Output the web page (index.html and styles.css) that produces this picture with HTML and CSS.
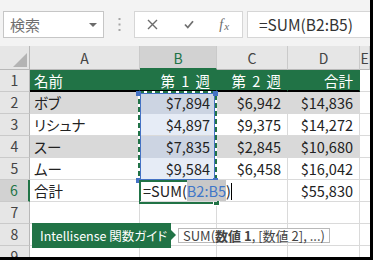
FILE: index.html
```html
<!DOCTYPE html>
<html lang="ja">
<head>
  <meta charset="UTF-8">
  <title>SUM</title>
  <link rel="stylesheet" href="styles.css">
</head>
<body>
  <div class="window">
    <div class="formula-bar">
      <div class="name-box">
        <span class="name">検索</span>
        <span class="caret"></span>
      </div>
      <div class="grip">
        <svg width="3" height="13" viewBox="0 0 3 13"><rect x="0.5" y="0" width="2" height="2" fill="#a6a6a6"/><rect x="0.5" y="5.5" width="2" height="2" fill="#a6a6a6"/><rect x="0.5" y="11" width="2" height="2" fill="#a6a6a6"/></svg>
      </div>
      <div class="fn-buttons">
        <span class="fn-btn"><svg width="11" height="11" viewBox="0 0 11 11"><path d="M1 1 L10 10 M10 1 L1 10" stroke="#6b6b6b" stroke-width="1.4" fill="none"/></svg></span>
        <span class="fn-btn"><svg width="10" height="9" viewBox="0 0 10 9"><path d="M1 4.5 L3.8 7.5 L9 1.2" stroke="#707070" stroke-width="1.8" fill="none"/></svg></span>
        <span class="fn-btn fx"><i>f</i><i class="sub">x</i></span>
      </div>
      <div class="formula-input">=SUM(B2:B5)</div>
    </div>

    <div class="sheet">
      <div class="corner"><span class="tri"></span></div>
      <div class="ch">A</div><div class="ch on">B</div><div class="ch">C</div><div class="ch">D</div><div class="ch">E</div>

      <div class="rh">1</div>
      <div class="c hd">名前</div><div class="c hd num">第 1 週</div><div class="c hd num">第 2 週</div><div class="c hd num">合計</div><div class="c"></div>

      <div class="rh">2</div>
      <div class="c band">ボブ</div><div class="c band ref-dark num">$7,894</div><div class="c band num">$6,942</div><div class="c band num">$14,836</div><div class="c"></div>

      <div class="rh">3</div>
      <div class="c">リシュナ</div><div class="c ref-light num">$4,897</div><div class="c num">$9,375</div><div class="c num">$14,272</div><div class="c"></div>

      <div class="rh">4</div>
      <div class="c band">スー</div><div class="c band ref-dark num">$7,835</div><div class="c band num">$2,845</div><div class="c band num">$10,680</div><div class="c"></div>

      <div class="rh">5</div>
      <div class="c">ムー</div><div class="c ref-light num">$9,584</div><div class="c num">$6,458</div><div class="c num">$16,042</div><div class="c"></div>

      <div class="rh on">6</div>
      <div class="c">合計</div><div class="c editing">=SUM(<span class="picked">B2:B5</span>)<span class="cursor"></span></div><div class="c"></div><div class="c num">$55,830</div><div class="c"></div>

      <div class="rh">7</div>
      <div class="c"></div><div class="c"></div><div class="c"></div><div class="c"></div><div class="c"></div>

      <div class="rh">8</div>
      <div class="c"></div><div class="c"></div><div class="c"></div><div class="c"></div><div class="c"></div>

      <div class="rh">9</div>
      <div class="c"></div><div class="c"></div><div class="c"></div><div class="c"></div><div class="c"></div>

      <!-- reference range B2:B5 -->
      <svg class="range" width="86" height="95" viewBox="0 0 86 95">
        <rect x="4" y="2" width="77" height="89" fill="none" stroke="#fff" stroke-width="2"/>
        <rect x="4" y="2" width="77" height="89" fill="none" stroke="#217346" stroke-width="2" stroke-dasharray="5 3"/>
        <rect x="5.5" y="3.5" width="74" height="86" fill="none" stroke="#4472c4" stroke-width="1"/>
        <rect x="1" y="1" width="5" height="5" fill="#4472c4"/>
        <rect x="78" y="1" width="5" height="5" fill="#4472c4"/>
        <rect x="1" y="88" width="5" height="5" fill="#4472c4"/>
        <rect x="78" y="88" width="5" height="5" fill="#4472c4"/>
      </svg>
      <div class="active"></div>

      <div class="callout">Intellisense 関数ガイド</div>
      <div class="hint">SUM(<b>数値 1</b>, [数値 2], ...)</div>
    </div>
  </div>
</body>
</html>
```

FILE: styles.css
```css
body {
  margin: 0;
  width: 373px;
  height: 260px;
  overflow: hidden;
  background: #000;
  font-family: "Noto Sans CJK JP", sans-serif;
}
.window {
  width: 370px;
  height: 257px;
  background: #fff;
  overflow: hidden;
}

/* formula bar */
.formula-bar {
  height: 46px;
  background: #f3f3f3;
  display: flex;
  align-items: flex-start;
  padding-top: 11px;
  box-sizing: border-box;
}
.name-box {
  margin-left: 3px;
  width: 101px;
  height: 27px;
  background: #fff;
  border: 1px solid #c6c6c6;
  box-sizing: border-box;
  display: flex;
  align-items: center;
  justify-content: space-between;
  padding: 0 6px 0 6px;
}
.name {
  font-size: 15px;
  color: #6e6e6e;
}
.caret {
  width: 0;
  height: 0;
  border-left: 4px solid transparent;
  border-right: 4px solid transparent;
  border-top: 4px solid #6b6b6b;
}
.grip {
  width: 30px;
  height: 27px;
  display: flex;
  align-items: center;
  justify-content: center;
}
.fn-buttons {
  width: 109px;
  height: 27px;
  background: #fff;
  border: 1px solid #d6d6d6;
  box-sizing: border-box;
  display: flex;
  align-items: center;
}
.fn-btn {
  width: 36px;
  display: flex;
  justify-content: center;
  align-items: center;
}
.fx {
  font-family: "Liberation Serif", serif;
  color: #6b6b6b;
  font-size: 14px;
}
.fx .sub {
  font-size: 11px;
  margin-left: 1px;
  position: relative;
  top: 1px;
}
.formula-input {
  flex: 1;
  margin-left: 4px;
  height: 27px;
  background: #fff;
  border: 1px solid #d6d6d6;
  border-right: none;
  box-sizing: border-box;
  padding-left: 11px;
  font-size: 15.5px;
  line-height: 25px;
  color: #333;
}

/* sheet grid */
.sheet {
  position: relative;
  display: grid;
  grid-template-columns: 30px 110px 77px 71px 72px 10px;
  grid-template-rows: 24px repeat(9, 22px);
}
.corner {
  background: #e6e6e6;
  border-right: 1px solid #b8b8b8;
  border-bottom: 1px solid #b8b8b8;
  box-sizing: border-box;
  display: flex;
  justify-content: flex-end;
  align-items: flex-end;
  padding: 0 2px 2px 0;
}
.tri {
  width: 0;
  height: 0;
  border-left: 14px solid transparent;
  border-bottom: 14px solid #b4b4b4;
}
.ch {
  background: #e6e6e6;
  border-right: 1px solid #cacaca;
  border-bottom: 1px solid #b8b8b8;
  box-sizing: border-box;
  text-align: center;
  font-size: 14px;
  line-height: 24px;
  color: #444;
}
.ch.on {
  background: #d2d2d2;
  color: #217346;
  border-bottom: 2px solid #217346;
}
.rh {
  background: #e6e6e6;
  border-right: 1px solid #b8b8b8;
  border-bottom: 1px solid #cacaca;
  box-sizing: border-box;
  text-align: center;
  font-size: 14px;
  line-height: 21px;
  color: #444;
}
.rh.on {
  background: #d2d2d2;
  color: #217346;
  border-right: 2px solid #217346;
}
.c {
  border-right: 1px solid #dadada;
  border-bottom: 1px solid #dadada;
  box-sizing: border-box;
  font-size: 14.5px;
  line-height: 21px;
  padding: 0 6px 0 4px;
  white-space: nowrap;
  overflow: hidden;
  color: #222;
  font-feature-settings: "palt";
}
.num {
  text-align: right;
}
.hd {
  background: #217346;
  color: #fff;
  border-color: transparent;
  border-bottom: 2px solid #000;
  word-spacing: 3px;
}
.band {
  background: #d9d9d9;
  border-color: transparent;
}
.ref-dark {
  background: #ccd4e2;
}
.ref-light {
  background: #e6ecf6;
}
.editing {
  overflow: visible;
  position: relative;
  z-index: 3;
  padding-left: 3px;
}
.picked {
  background: #c8c8c8;
  color: #3f76c8;
}
.cursor {
  display: inline-block;
  width: 1px;
  height: 17px;
  background: #000;
  vertical-align: -3px;
}

/* overlays */
.range {
  position: absolute;
  left: 135px;
  top: 44px;
  z-index: 2;
}
.active {
  position: absolute;
  left: 139px;
  top: 134px;
  width: 79px;
  height: 24px;
  border: 2px solid #217346;
  box-sizing: border-box;
  z-index: 2;
}
.active::after {
  content: "";
  position: absolute;
  right: -4px;
  bottom: -4px;
  width: 5px;
  height: 5px;
  background: #217346;
  border: 1px solid #fff;
}
.callout {
  position: absolute;
  left: 32px;
  top: 177px;
  width: 139px;
  height: 25px;
  background: #217346;
  color: #fff;
  font-size: 12.5px;
  line-height: 25px;
  padding-left: 8px;
  box-sizing: border-box;
  white-space: nowrap;
  font-feature-settings: "palt";
  z-index: 4;
}
.callout::after {
  content: "";
  position: absolute;
  left: 100%;
  top: 7px;
  border-left: 5px solid #217346;
  border-top: 5px solid transparent;
  border-bottom: 5px solid transparent;
}
.hint {
  position: absolute;
  left: 178px;
  top: 182px;
  height: 15px;
  padding: 0 4px;
  background: #fff;
  border: 1px solid #b9b9b9;
  box-sizing: border-box;
  font-size: 13px;
  line-height: 13px;
  color: #444;
  white-space: nowrap;
  z-index: 4;
}
.hint b {
  font-weight: bold;
}
```
